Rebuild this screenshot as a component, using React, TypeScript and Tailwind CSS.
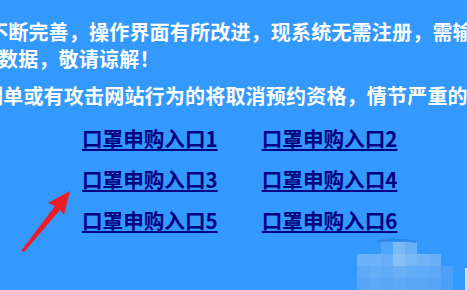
import React from 'react';

const lines = [
  { text: '不断完善，操作界面有所改进，现系统无需注册，需输入相关数据', cls: 'ml-[-12px]' },
  { text: '数据，敬请谅解！', cls: 'ml-[-2px]' },
  { text: '刷单或有攻击网站行为的将取消预约资格，情节严重的，将追究责任', cls: 'mt-[10px] ml-[-17px]' },
];

const links = [1, 2, 3, 4, 5, 6];

// blurred patch in the lower right corner
const mosaic: [number, number, string][] = [
  [381, 242, '#4fa5fb'], [393, 242, '#79b9f6'], [405, 242, '#68b0f8'],
  [357, 254, '#6cb2f8'], [369, 254, '#6eb3f8'], [381, 254, '#67aff7'], [393, 254, '#86c0f6'],
  [405, 254, '#78b8f6'], [417, 254, '#70b4f7'], [429, 254, '#6aaff6'],
  [357, 266, '#5fa9f6'], [369, 266, '#66adf6'], [381, 266, '#60aaf6'], [393, 266, '#6aaff5'],
  [405, 266, '#64acf5'], [417, 266, '#62abf6'], [429, 266, '#5ea8f6'], [441, 266, '#4ca0f8'],
  [357, 278, '#58a5f6'], [369, 278, '#5ea8f5'], [381, 278, '#5ba6f5'], [393, 278, '#5fa9f5'],
  [405, 278, '#5ca7f5'], [417, 278, '#5aa6f5'], [429, 278, '#56a4f6'], [441, 278, '#48a0f8'],
];

export default function App() {
  return (
    <div className="relative w-[467px] h-[290px] overflow-hidden bg-[#3399ff] font-['Noto_Sans_CJK_SC','Microsoft_YaHei',sans-serif] font-bold">
      <div className="pt-[18px] text-white text-[20px] tracking-[0.2px] leading-[27px] whitespace-nowrap">
        {lines.map((l) => (
          <p key={l.text} className={l.cls}>
            {l.text}
          </p>
        ))}
      </div>

      <div className="mt-[16px] ml-[82px] grid grid-cols-[auto_auto] justify-start gap-x-[44px] gap-y-[14px] text-[20.6px] leading-[27px]">
        {links.map((n) => (
          <a
            key={n}
            href="#"
            className="text-[#000080] underline decoration-2 underline-offset-[2px] whitespace-nowrap"
          >
            口罩申购入口{n}
          </a>
        ))}
      </div>

      <svg className="absolute left-0 top-0" width="467" height="290" viewBox="0 0 467 290">
        <polygon
          points="70,191 48,203 55,206 21,251 24,252 60,210 64,215"
          fill="#ee1c25"
        />
        {mosaic.map(([x, y, c]) => (
          <rect key={`${x}-${y}`} x={x} y={y} width="12" height="12" fill={c} />
        ))}
        <path d="M377 241 Q400 238 416 242" stroke="#2a86e6" strokeWidth="2" fill="none" />
        <rect x="465" y="268" width="2" height="22" fill="#cfe4fb" />
      </svg>
    </div>
  );
}
